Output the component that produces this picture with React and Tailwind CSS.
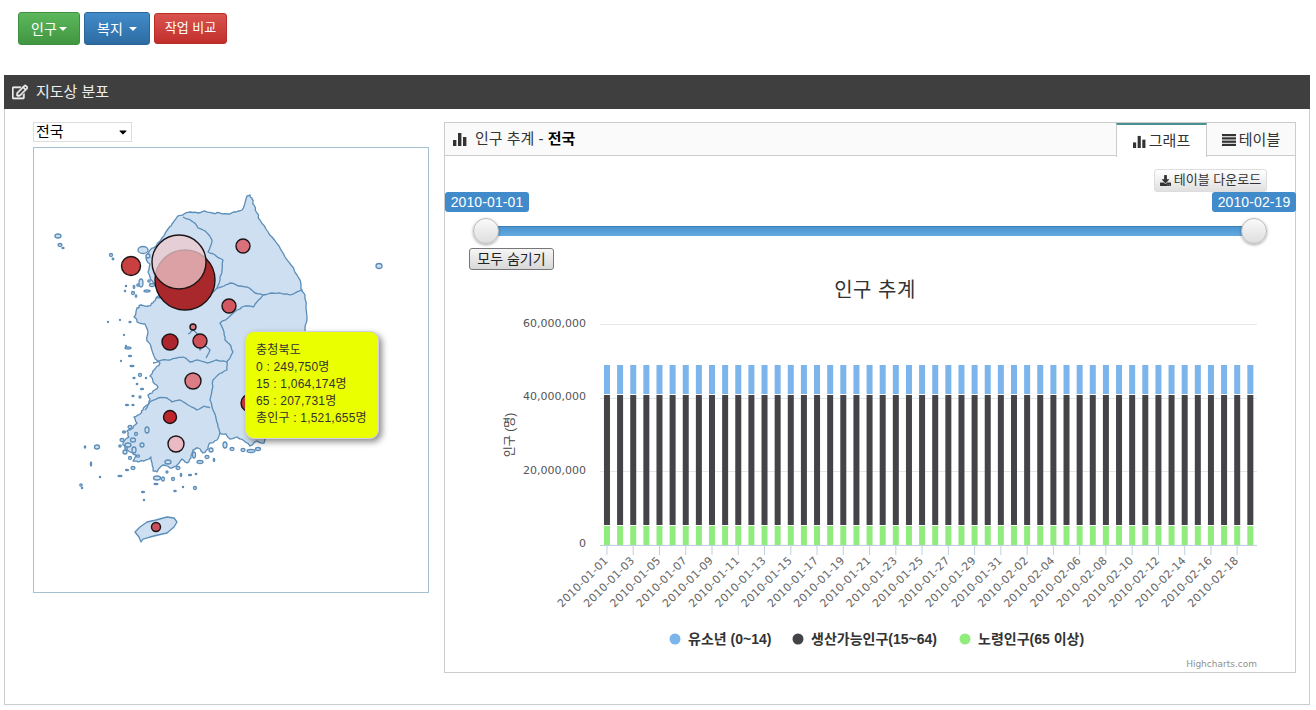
import React from "react";
import { FaCaretDown, FaDownload, FaRegEdit } from "react-icons/fa";

const BARS = Array.from({ length: 50 }, (_, i) => i);

const dateLabel = (i) => {
  // one tick per two days, starting 2010-01-01
  const d = new Date(Date.UTC(2010, 0, 1 + i));
  const mm = String(d.getUTCMonth() + 1).padStart(2, "0");
  const dd = String(d.getUTCDate()).padStart(2, "0");
  return `2010-${mm}-${dd}`;
};

// adds small fixed wobble to a polyline so coast and borders look hand surveyed
const roughen = (points, amp, closed) => {
  let seed = 7;
  const rnd = () => {
    seed = (seed * 16807) % 2147483647;
    return (seed % 1000) / 500 - 1;
  };
  const nums = points.trim().split(/\s+/).map(Number);
  const pts = [];
  for (let i = 0; i < nums.length; i += 2) pts.push([nums[i], nums[i + 1]]);
  const out = [];
  const last = closed ? pts.length : pts.length - 1;
  for (let i = 0; i < last; i++) {
    const [x1, y1] = pts[i];
    const [x2, y2] = pts[(i + 1) % pts.length];
    out.push(`${x1} ${y1}`);
    for (let k = 1; k < 3; k++) {
      const t = k / 3;
      out.push(`${(x1 + (x2 - x1) * t + rnd() * amp).toFixed(1)} ${(y1 + (y2 - y1) * t + rnd() * amp).toFixed(1)}`);
    }
  }
  if (!closed) out.push(`${pts[pts.length - 1][0]} ${pts[pts.length - 1][1]}`);
  return `M${out.join(" L")}${closed ? " Z" : ""}`;
};

const BarIcon = ({ className }) => (
  <svg viewBox="0 0 14 14" className={className} fill="currentColor">
    <rect x="0" y="8" width="3.4" height="6" />
    <rect x="5" y="1" width="3.4" height="13" />
    <rect x="10" y="5" width="3.4" height="9" />
  </svg>
);

const RowsIcon = ({ className }) => (
  <svg viewBox="0 0 14 12" className={className} fill="currentColor">
    <rect x="0" y="0" width="14" height="2.2" />
    <rect x="0" y="3.3" width="14" height="2.2" />
    <rect x="0" y="6.6" width="14" height="2.2" />
    <rect x="0" y="9.8" width="14" height="2.2" />
  </svg>
);

const Caret = () => (
  <span className="ml-[2px] inline-block h-0 w-0 border-x-4 border-t-4 border-x-transparent border-t-white" />
);

const MAIN_LAND = roughen(
  "162 238 168 229 172 224 177 217 184 214 190 212 198 213 205 211 212 213 220 213 228 214 236 212 242 210 245 203 247 196 250 195 252 199 254 205 257 213 260 220 266 229 272 237 279 246 285 257 291 265 297 275 301 284 302 290 305 295 306 306 307 317 305 330 300 360 285 400 272 425 264 443 257 441 250 446 243 440 237 437 230 439 226 434 220 433 217 440 210 443 208 449 203 453 198 448 193 450 191 458 187 463 182 459 176 466 170 468 163 465 157 472 153 471 152 463 151 457 144 461 138 462 133 461 136 455 130 452 125 447 123 443 129 437 127 431 133 428 137 423 134 417 140 414 143 410 147 405 150 400 148 395 153 391 158 387 153 382 150 376 155 369 160 363 154 356 151 347 147 341 148 333 145 324 137 322 134 317 137 308 141 305 148 306 153 303 156 298 162 293 156 286 153 282 148 272 150 264 146 258 150 250 156 246",
  0.9,
  true
);

const JEJU =
  "M135 532 L140 527 L147 522 L156 520 L167 517 L174 518 L177 522 L174 527 L167 533 L158 535 L150 537 L143 539 L141 542 L139 537 Z";

const BORDERS = [
  "183 217 188 219 193 222 198 228 203 230 208 234 212 240 211 245 208 252 215 255 223 260 222 270 220 280 217 288",
  "217 288 224 286 230 283 238 286 247 287 255 293 263 295 272 293 280 293 290 295 302 290",
  "263 295 256 303 253 307 245 306 237 310 228 318 220 323 224 332 225 340 231 346 233 352 230 358 227 362",
  "217 288 208 296 198 299 188 296 176 300 165 298 156 298",
  "153 363 162 360 170 360 177 358 183 357 190 362 198 360 207 363 216 360 227 362",
  "227 362 227 370 219 374 213 380 212 390 210 400 213 410 216 418 218 427 220 433",
  "145 410 150 402 158 398 167 398 172 402 180 400 188 405 197 410 204 406 210 408",
  "188 334 193 330 198 335 197 345 200 350 204 345 210 350 206 358",
].map((b) => roughen(b, 0.7, false));

// [x, y, rx, ry] islands around the coast
const ISLANDS = [
  [58, 236, 3, 2], [60, 245, 2, 1.5], [63, 248, 1, 0.6], [111, 255, 1.5, 1.5], [113, 259, 0.8, 0.8],
  [379, 266, 3, 2.5], [143, 250, 5, 3.5], [148, 256, 2, 2], [138, 285, 1.2, 1.2], [134, 287, 0.8, 1.5],
  [133, 293, 1.5, 1.5], [136, 296, 0.8, 1.2], [141, 283, 2, 4], [147, 291, 3, 1],
  [149, 281, 1.2, 1.2], [152, 285, 2.5, 1.5], [126, 286, 0.6, 0.6], [125, 291, 0.6, 0.6],
  [108, 322, 0.5, 0.5], [120, 320, 0.5, 0.5], [130, 322, 1, 0.6], [124, 335, 0.5, 0.5], [126, 346, 0.5, 0.5],
  [128, 348, 3, 1], [130, 356, 1.5, 0.7], [121, 361, 0.5, 0.5], [132, 366, 2, 0.7], [140, 375, 1.5, 1.5],
  [134, 378, 1, 0.7], [146, 378, 0.6, 0.6], [137, 384, 0.7, 0.7], [142, 389, 1.5, 0.7], [133, 396, 1, 0.7],
  [127, 405, 1.5, 0.7], [133, 405, 1, 0.7], [140, 397, 1, 1],
  [85, 447, 0.7, 1], [97, 447, 2.5, 2], [91, 464, 0.6, 2], [81, 485, 1.2, 1.2], [100, 477, 0.6, 0.6],
  [128, 445, 3, 2], [133, 440, 2.5, 2], [125, 452, 2, 2], [134, 450, 2, 3], [130, 458, 1.5, 1.5],
  [147, 430, 2, 3], [142, 445, 2, 2], [130, 427, 2, 1.5], [122, 440, 2, 1.5], [124, 432, 1.5, 1],
  [136, 434, 1.5, 1.5], [126, 448, 1.2, 1.2], [138, 456, 1.5, 1.2], [120, 446, 1.2, 1],
  [127, 470, 1.5, 0.7], [120, 476, 2, 0.7], [133, 468, 2, 1.5], [157, 478, 3.5, 2], [163, 479, 1.5, 2],
  [173, 479, 1.5, 1.5], [167, 472, 1, 1], [181, 475, 0.7, 1.5], [190, 475, 1.5, 0.7], [196, 474, 0.7, 0.7],
  [168, 462, 3, 2], [178, 468, 2, 1.5], [200, 462, 3, 1.5], [194, 455, 1.5, 3], [207, 457, 2, 1.5],
  [211, 450, 2, 2], [214, 460, 0.7, 1.5], [225, 445, 2, 3], [232, 449, 2, 1.5], [243, 450, 2, 1.5],
  [251, 451, 4, 1.5], [258, 449, 2.5, 1.5], [156, 484, 2, 0.7], [183, 487, 0.6, 0.6], [195, 488, 1.5, 1.5],
  [175, 491, 1.2, 0.6], [143, 492, 1.5, 0.6], [144, 500, 0.6, 0.6], [82, 488, 0.6, 0.6],
];

const BUBBLES = [
  { x: 185, y: 280, r: 30, fill: "#a9282c" },
  { x: 179, y: 262, r: 27, fill: "#ecc8cc", opacity: 0.76 },
  { x: 131, y: 266, r: 9.5, fill: "#c8403f" },
  { x: 243, y: 246, r: 7, fill: "#d9707a" },
  { x: 229, y: 306, r: 7, fill: "#d15860" },
  { x: 193, y: 327, r: 3, fill: "#dc7a80" },
  { x: 200, y: 341, r: 7, fill: "#d05058" },
  { x: 170, y: 342, r: 8, fill: "#ae262d" },
  { x: 193, y: 381, r: 8, fill: "#dc7c84" },
  { x: 250, y: 403, r: 9, fill: "#c8353a" },
  { x: 170, y: 417, r: 6.5, fill: "#bf262c" },
  { x: 176, y: 444, r: 8, fill: "#eabac4" },
  { x: 156, y: 527, r: 4.5, fill: "#c9505a" },
];

const KoreaMap = () => (
  <svg viewBox="34 148 394 444" className="block h-full w-full">
    <g fill="#cddff0" stroke="#5b8db8" strokeWidth="1.3" strokeLinejoin="round">
      <path d={MAIN_LAND} />
      <path d={JEJU} />
      {ISLANDS.map(([x, y, rx, ry], i) => (
        <ellipse key={i} cx={x} cy={y} rx={rx} ry={ry} />
      ))}
    </g>
    <g fill="none" stroke="#5b8db8" strokeWidth="1.3" strokeLinejoin="round">
      {BORDERS.map((d, i) => (
        <path key={i} d={d} />
      ))}
    </g>
    {BUBBLES.map((b, i) => (
      <circle
        key={i}
        cx={b.x}
        cy={b.y}
        r={b.r}
        fill={b.fill}
        fillOpacity={b.opacity || 1}
        stroke="#1c1416"
        strokeWidth="1.4"
      />
    ))}
  </svg>
);

const Chart = () => {
  const axisFont = "'DejaVu Sans', sans-serif";
  const krFont = "'Liberation Sans', 'Noto Sans CJK KR', sans-serif";
  const center = (i) => 600.4 + 13.13 * (i + 0.5);
  return (
    <svg viewBox="445 270 850 402" className="block h-[402px] w-[850px]">
      <text x="875" y="297" textAnchor="middle" fontSize="20" letterSpacing="0.5" fill="#333" fontFamily={krFont}>
        인구 추계
      </text>
      <line x1="600" x2="1257" y1="324.5" y2="324.5" stroke="#e6e6e6" />
      <line x1="600" x2="1257" y1="398.5" y2="398.5" stroke="#e6e6e6" />
      <line x1="600" x2="1257" y1="471.5" y2="471.5" stroke="#e6e6e6" />
      {[
        ["60,000,000", 327],
        ["40,000,000", 400],
        ["20,000,000", 474],
        ["0", 547],
      ].map(([t, y]) => (
        <text key={t} x="586" y={y} textAnchor="end" fontSize="11" fill="#555" fontFamily={axisFont}>
          {t}
        </text>
      ))}
      <text
        transform="translate(514 435) rotate(-90)"
        textAnchor="middle"
        fontSize="12"
        fill="#444"
        fontFamily={krFont}
      >
        인구 (명)
      </text>
      {BARS.map((i) => (
        <g key={i}>
          <rect x={center(i) - 3} y="365" width="6" height="29" fill="#7cb5ec" />
          <rect x={center(i) - 3} y="395" width="6" height="130" fill="#434348" />
          <rect x={center(i) - 3} y="526" width="6" height="19" fill="#90ed7d" />
        </g>
      ))}
      <line x1="600" x2="1257" y1="545.5" y2="545.5" stroke="#c0d0e0" />
      {BARS.filter((i) => i % 2 === 0).map((i) => (
        <g key={i}>
          <line x1={center(i)} x2={center(i)} y1="546" y2="555" stroke="#c0d0e0" />
          <text
            transform={`translate(${center(i) + 2} 561) rotate(-45)`}
            textAnchor="end"
            fontSize="11"
            letterSpacing="0.25"
            fill="#666"
            fontFamily={axisFont}
          >
            {dateLabel(i)}
          </text>
        </g>
      ))}
      <g fontSize="14" fontWeight="700" fill="#333" fontFamily={krFont}>
        <circle cx="675" cy="639" r="5.5" fill="#7cb5ec" />
        <text x="688" y="644">유소년 (0~14)</text>
        <circle cx="798" cy="639" r="5.5" fill="#434348" />
        <text x="811" y="644">생산가능인구(15~64)</text>
        <circle cx="965" cy="639" r="5.5" fill="#90ed7d" />
        <text x="978" y="644">노령인구(65 이상)</text>
      </g>
      <text x="1257" y="667" textAnchor="end" fontSize="9" fill="#909090" fontFamily={axisFont}>
        Highcharts.com
      </text>
    </svg>
  );
};

const SliderHandle = () => (
  <div className="z-10 h-[26px] w-[26px] shrink-0 rounded-full border border-[#bbb] bg-linear-to-b from-[#fafafa] to-[#dedede] shadow-[0_1px_3px_rgba(0,0,0,0.35)]" />
);

const App = () => {
  return (
    <div className="h-[710px] w-[1316px] overflow-hidden bg-white font-['Liberation_Sans','Noto_Sans_CJK_KR',sans-serif] text-sm text-[#333]">
      {/* Top buttons */}
      <div className="flex h-[75px] items-start gap-1 pl-[18px] pt-[12px]">
        <button className="flex h-[33px] w-[62px] items-center justify-center rounded-[3px] border border-[#3e8f3e] bg-linear-to-b from-[#5cb85c] to-[#419641] text-white">
          인구
          <Caret />
        </button>
        <button className="flex h-[33px] w-[66px] items-center justify-center gap-1 rounded-[3px] border border-[#2b669a] bg-linear-to-b from-[#428bca] to-[#2d6ca2] text-white">
          복지
          <Caret />
        </button>
        <button className="mt-px h-[31px] w-[73px] rounded-[3px] border border-[#b92c28] bg-linear-to-b from-[#d9534f] to-[#c12e2a] text-[13px] text-white">
          작업 비교
        </button>
      </div>

      {/* Main panel */}
      <div className="ml-[4px] h-[630px] w-[1306px] border-x border-b border-[#ccc]">
        <div className="-mx-px flex h-[34px] items-center gap-[8px] bg-[#3f3f3f] pl-[8px] text-[15px] text-[#eee]">
          <FaRegEdit className="h-[16px] w-[16px]" stroke="currentColor" strokeWidth={20} />
          <span>지도상 분포</span>
        </div>
        <div className="flex pt-[13px]">
          {/* Map column */}
          <div className="ml-[28px] w-[396px] shrink-0">
            <div className="flex h-[20px] w-[99px] items-center justify-between border border-[#ddd] px-[2px] text-[15px] text-black">
              <span>전국</span>
              <FaCaretDown className="h-[12px] w-[12px]" />
            </div>
            <div className="relative mt-[5px] h-[446px] w-[396px] border border-[#a5bfd3]">
              <KoreaMap />
              <div className="absolute left-[211px] top-[183px] h-[108px] w-[134px] rounded-[9px] border border-[#cfd0e8] bg-[#eaff00] pl-[10px] pt-[8px] text-xs leading-[17px] tracking-[0.2px] text-[#333] shadow-[3px_3px_6px_rgba(0,0,0,0.45)]">
                <div className="mt-[2px]">충청북도</div>
                <div>0 : 249,750명</div>
                <div>15 : 1,064,174명</div>
                <div>65 : 207,731명</div>
                <div>총인구 : 1,521,655명</div>
              </div>
            </div>
          </div>

          {/* Chart widget */}
          <div className="ml-[15px] h-[551px] w-[852px] shrink-0 border border-[#ccc]">
            <div className="flex h-[33px] items-center justify-between border-b border-[#ccc] bg-[#fafafa]">
              <div className="flex items-center gap-[8px] pl-[8px] text-[15px]">
                <BarIcon className="h-[14px] w-[14px] text-[#333]" />
                <span>
                  인구 추계 - <b className="text-black">전국</b>
                </span>
              </div>
              <div className="flex h-[33px] self-start text-[15px]">
                <div className="flex h-[34px] w-[91px] items-center justify-center gap-[3px] border-x border-t-2 border-x-[#ccc] border-t-[#4a908f] bg-white">
                  <BarIcon className="h-[13px] w-[13px] text-[#333]" />
                  <span>그래프</span>
                </div>
                <div className="flex h-[33px] w-[88px] items-center justify-center gap-[3px]">
                  <RowsIcon className="h-[12px] w-[14px] text-[#333]" />
                  <span>테이블</span>
                </div>
              </div>
            </div>

            <div className="flex justify-end pr-[28px] pt-[13px]">
              <button className="flex h-[23px] w-[113px] items-center justify-center gap-[3px] rounded-[3px] border border-[#ddd] bg-linear-to-b from-white to-[#e0e0e0] text-[13px]">
                <FaDownload className="h-[11px] w-[11px]" />
                테이블 다운로드
              </button>
            </div>
            <div className="-mr-px flex justify-between tracking-[0.1px]">
              <span className="flex h-[20px] w-[84px] items-center justify-center rounded-[3px] bg-[#428bca] text-white">
                2010-01-01
              </span>
              <span className="flex h-[20px] w-[84px] items-center justify-center rounded-[3px] bg-[#428bca] text-white">
                2010-02-19
              </span>
            </div>
            <div className="mx-[28px] mt-[6px] flex h-[26px] items-center">
              <SliderHandle />
              <div className="-mx-[13px] h-[10px] flex-1 border-t border-[#3a7fb5] bg-linear-to-b from-[#4a94d0] to-[#65abe0]" />
              <SliderHandle />
            </div>
            <div className="mt-[4px] pl-[24px]">
              <button className="h-[22px] w-[85px] rounded-[3px] border border-[#777] bg-linear-to-b from-[#f6f6f6] to-[#d8d8d8] text-sm text-[#222]">
                모두 숨기기
              </button>
            </div>
            <Chart />
          </div>
        </div>
      </div>
    </div>
  );
};

export default App;
